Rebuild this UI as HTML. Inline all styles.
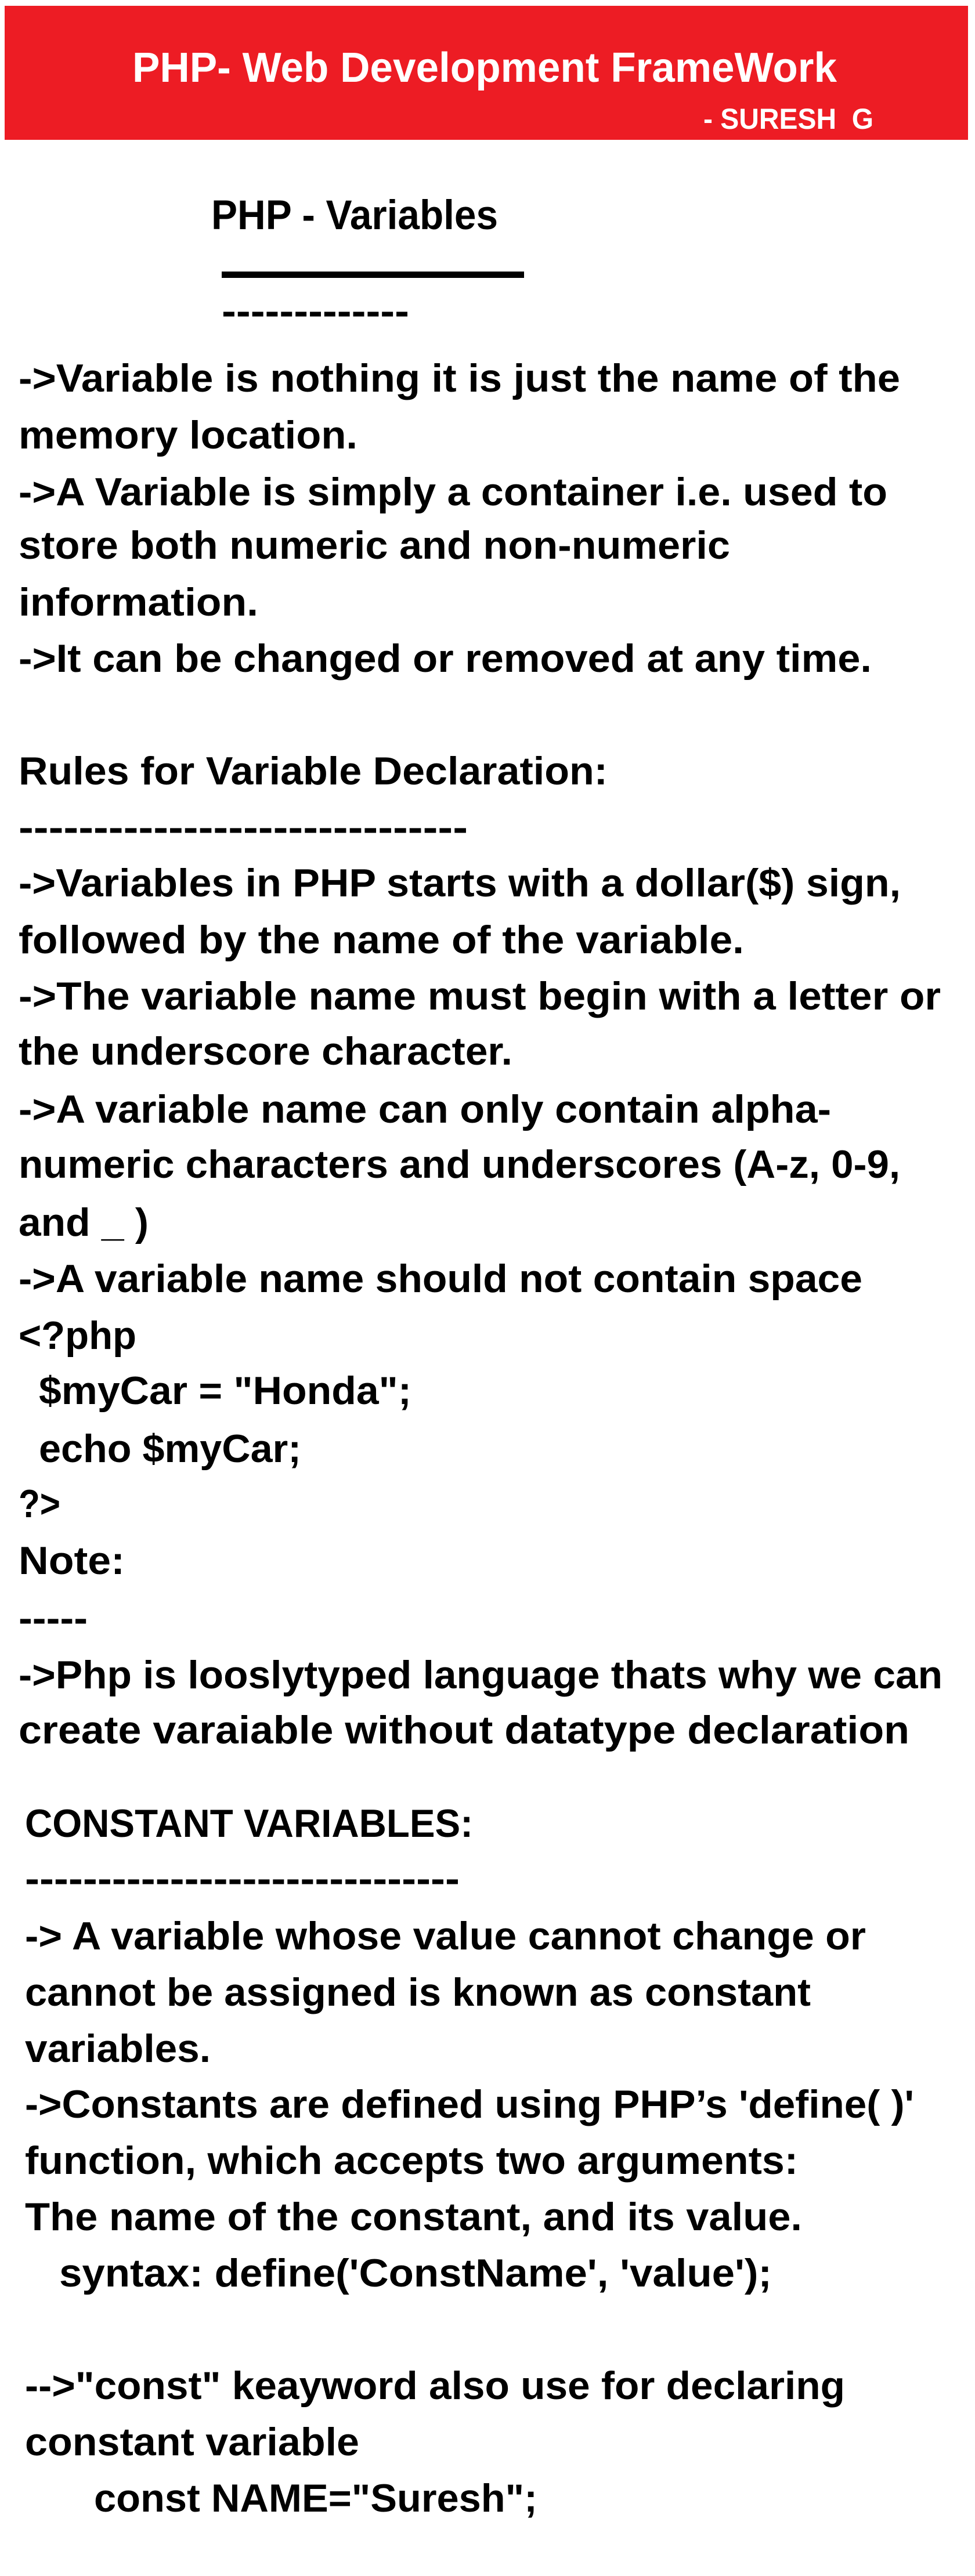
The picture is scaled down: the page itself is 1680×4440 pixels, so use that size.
<!DOCTYPE html>
<html><head><meta charset="utf-8"><style>
html,body{margin:0;padding:0;background:#fff;width:1680px;height:4440px;overflow:hidden}
svg{display:block}
text{font-family:"Liberation Sans",sans-serif;font-weight:bold;fill:#000}
</style></head><body>
<svg width="1680" height="4440" viewBox="0 0 1680 4440" xmlns="http://www.w3.org/2000/svg">
<rect x="0" y="0" width="1680" height="4440" fill="#fff"/>
<rect x="8" y="10" width="1660" height="231" fill="#ED1C24"/>
<text x="228" y="141" font-size="72" style="fill:#fff" textLength="1214" lengthAdjust="spacingAndGlyphs">PHP- Web Development FrameWork</text>
<text x="1212" y="222" font-size="50" style="fill:#fff" textLength="293" lengthAdjust="spacingAndGlyphs">- SURESH&#160; G</text>

<text x="364" y="395" font-size="71" textLength="494" lengthAdjust="spacingAndGlyphs">PHP - Variables</text>
<rect x="382" y="468" width="521" height="11" fill="#000"/>
<text x="382" y="559" font-size="68" textLength="323" lengthAdjust="spacingAndGlyphs">-------------</text>

<g font-size="68">
<text x="32" y="675" textLength="1519" lengthAdjust="spacingAndGlyphs">-&gt;Variable is nothing it is just the name of the</text>
<text x="32" y="773" textLength="584" lengthAdjust="spacingAndGlyphs">memory location.</text>
<text x="32" y="871" textLength="1497" lengthAdjust="spacingAndGlyphs">-&gt;A Variable is simply a container i.e. used to</text>
<text x="32" y="963" textLength="1226" lengthAdjust="spacingAndGlyphs">store both numeric and non-numeric</text>
<text x="32" y="1061" textLength="413" lengthAdjust="spacingAndGlyphs">information.</text>
<text x="32" y="1158" textLength="1470" lengthAdjust="spacingAndGlyphs">-&gt;It can be changed or removed at any time.</text>

<text x="32" y="1352" textLength="1015" lengthAdjust="spacingAndGlyphs">Rules for Variable Declaration:</text>
<text x="32" y="1449" textLength="774" lengthAdjust="spacingAndGlyphs">------------------------------</text>
<text x="32" y="1545" textLength="1520" lengthAdjust="spacingAndGlyphs">-&gt;Variables in PHP starts with a dollar($) sign,</text>
<text x="32" y="1643" textLength="1250" lengthAdjust="spacingAndGlyphs">followed by the name of the variable.</text>
<text x="32" y="1740" textLength="1589" lengthAdjust="spacingAndGlyphs">-&gt;The variable name must begin with a letter or</text>
<text x="32" y="1835" textLength="851" lengthAdjust="spacingAndGlyphs">the underscore character.</text>
<text x="32" y="1935" textLength="1400" lengthAdjust="spacingAndGlyphs">-&gt;A variable name can only contain alpha-</text>
<text x="32" y="2030" textLength="1519" lengthAdjust="spacingAndGlyphs">numeric characters and underscores (A-z, 0-9,</text>
<text x="32" y="2130" textLength="224" lengthAdjust="spacingAndGlyphs">and _ )</text>
<text x="32" y="2227" textLength="1454" lengthAdjust="spacingAndGlyphs">-&gt;A variable name should not contain space</text>
<text x="32" y="2325" textLength="203" lengthAdjust="spacingAndGlyphs">&lt;?php</text>
<text x="67" y="2420" textLength="642" lengthAdjust="spacingAndGlyphs">$myCar = "Honda";</text>
<text x="67" y="2520" textLength="452" lengthAdjust="spacingAndGlyphs">echo $myCar;</text>
<text x="32" y="2615" textLength="72" lengthAdjust="spacingAndGlyphs">?&gt;</text>
<text x="32" y="2713" textLength="183" lengthAdjust="spacingAndGlyphs">Note:</text>
<text x="32" y="2812" textLength="119" lengthAdjust="spacingAndGlyphs">-----</text>
<text x="32" y="2910" textLength="1592" lengthAdjust="spacingAndGlyphs">-&gt;Php is looslytyped language thats why we can</text>
<text x="32" y="3005" textLength="1535" lengthAdjust="spacingAndGlyphs">create varaiable without datatype declaration</text>

<text x="43" y="3166" textLength="772" lengthAdjust="spacingAndGlyphs">CONSTANT VARIABLES:</text>
<text x="43" y="3261" textLength="749" lengthAdjust="spacingAndGlyphs">------------------------------</text>
<text x="43" y="3360" textLength="1449" lengthAdjust="spacingAndGlyphs">-&gt; A variable whose value cannot change or</text>
<text x="43" y="3457" textLength="1354" lengthAdjust="spacingAndGlyphs">cannot be assigned is known as constant</text>
<text x="43" y="3554" textLength="320" lengthAdjust="spacingAndGlyphs">variables.</text>
<text x="43" y="3650" textLength="1532" lengthAdjust="spacingAndGlyphs">-&gt;Constants are defined using PHP’s 'define( )'</text>
<text x="43" y="3747" textLength="1332" lengthAdjust="spacingAndGlyphs">function, which accepts two arguments:</text>
<text x="43" y="3844" textLength="1339" lengthAdjust="spacingAndGlyphs">The name of the constant, and its value.</text>
<text x="102" y="3941" textLength="1228" lengthAdjust="spacingAndGlyphs">syntax: define('ConstName', 'value');</text>
<text x="43" y="4135" textLength="1413" lengthAdjust="spacingAndGlyphs">--&gt;"const" keayword also use for declaring</text>
<text x="43" y="4232" textLength="576" lengthAdjust="spacingAndGlyphs">constant variable</text>
<text x="162" y="4329" textLength="764" lengthAdjust="spacingAndGlyphs">const NAME="Suresh";</text>
</g>
</svg>
</body></html>
